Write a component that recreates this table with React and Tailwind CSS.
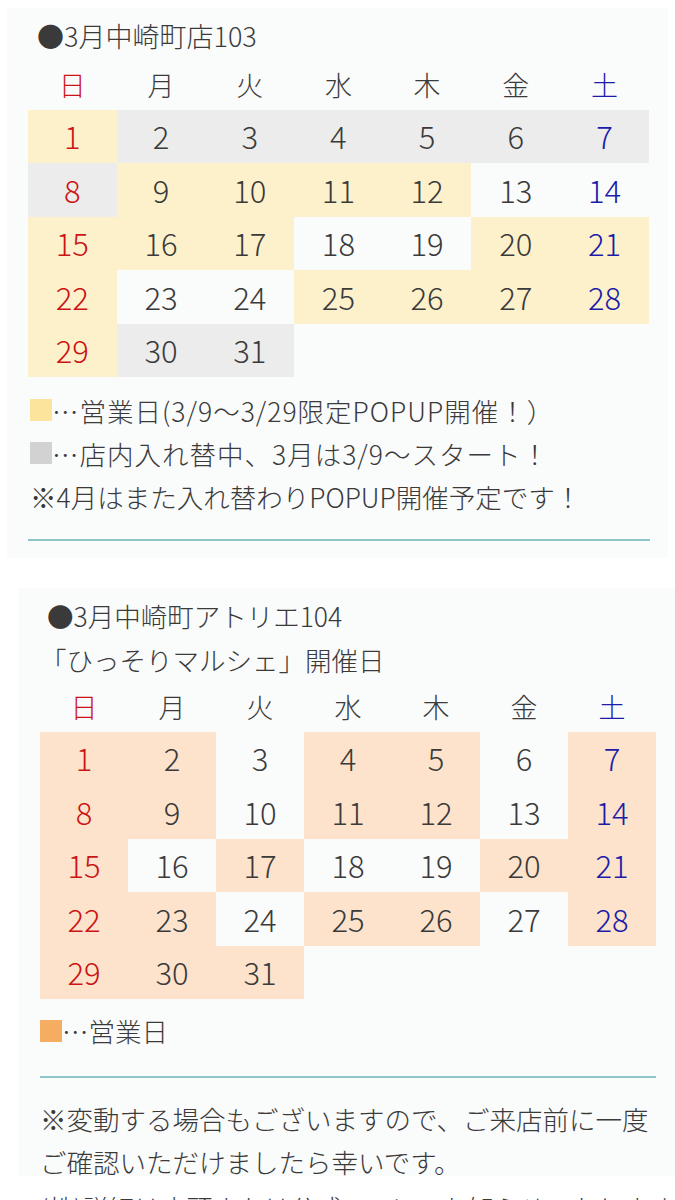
import React from "react";

const Y = "bg-[#fdf1cc]";
const G = "bg-[#ececec]";
const P = "bg-[#fde3cb]";
const W = "";

const cal1 = [
  [Y, G, G, G, G, G, G],
  [G, Y, Y, Y, Y, W, W],
  [Y, Y, Y, W, W, Y, Y],
  [Y, W, W, Y, Y, Y, Y],
  [Y, G, G],
];
const cal2 = [
  [P, P, W, P, P, W, P],
  [P, P, W, P, P, W, P],
  [P, W, P, W, W, P, P],
  [P, P, W, P, P, W, P],
  [P, P, P],
];

const days = ["日", "月", "火", "水", "木", "金", "土"];

function dayColor(i) {
  if (i === 0) return "text-[#cc1414]";
  if (i === 6) return "text-[#1c1ca8]";
  return "text-[#3a3a3a]";
}

function Calendar({ bgs, colW, headH }) {
  const cells = [];
  let n = 1;
  bgs.forEach((row, r) => {
    row.forEach((bg, c) => {
      cells.push(
        <div
          key={n}
          className={`h-[53.4px] flex items-center justify-center text-[31px] ${bg} ${dayColor(c)}`}
        >
          {n}
        </div>
      );
      n++;
    });
  });
  return (
    <div>
      <div className={`grid ${colW} ${headH} items-center`}>
        {days.map((d, i) => (
          <div key={d} className={`text-center text-[27px] ${dayColor(i)}`}>
            {d}
          </div>
        ))}
      </div>
      <div className={`grid ${colW}`}>{cells}</div>
    </div>
  );
}

export default function App() {
  return (
    <div
      className="w-[675px] h-[1200px] bg-white overflow-hidden text-[#3a3a3a] font-light"
      style={{ fontFamily: '"Noto Sans CJK JP", "Noto Sans", sans-serif' }}
    >
      {/* Panel 1 */}
      <div className="pt-[8px] pl-[7px] pr-[7px]">
        <div className="bg-[#fafbfb] h-[550px] pl-[21px] pr-[11px] pt-[10px]">
          <div className="text-[27px] leading-[36px] pl-[9px]">●3月中崎町店103</div>
          <div className="mt-[6px]">
            <Calendar bgs={cal1} colW="grid-cols-[repeat(7,88.7px)]" headH="h-[50px]" />
          </div>
          <div className="mt-[12px] text-[26.5px] leading-[43px] pl-[2px] whitespace-nowrap">
            <div className="flex items-center tracking-[1px]">
              <span className="inline-block w-[22px] h-[22px] bg-[#fce49c]"></span>
              <span>…営業日(3/9〜3/29限定POPUP開催！）</span>
            </div>
            <div className="flex items-center tracking-[1px]">
              <span className="inline-block w-[22px] h-[22px] bg-[#d2d2d2]"></span>
              <span>…店内入れ替中、3月は3/9〜スタート！</span>
            </div>
            <div>※4月はまた入れ替わりPOPUP開催予定です！</div>
          </div>
          <div className="mt-[21px] h-[2px] w-[622px] bg-[#8fc5c9]"></div>
        </div>
      </div>

      {/* Panel 2 */}
      <div className="pt-[30px] pl-[18px]">
        <div className="bg-[#fafbfb] h-[588px] pl-[22px] pr-[19px] pt-[6px]">
          <div className="text-[26.5px] leading-[44px] pl-[7px]">●3月中崎町アトリエ104</div>
          <div className="text-[26.5px] leading-[44px]">「ひっそりマルシェ」開催日</div>
          <div className="mt-[0px]">
            <Calendar bgs={cal2} colW="grid-cols-[repeat(7,88px)]" headH="h-[50px]" />
          </div>
          <div className="mt-[11px] text-[26.5px] leading-[42px] flex items-center">
            <span className="inline-block w-[22px] h-[22px] bg-[#f5ad62]"></span>
            <span>…営業日</span>
          </div>
          <div className="mt-[24px] h-[2px] w-[616px] bg-[#8fc5c9]"></div>
          <div className="mt-[19px] text-[26.5px] leading-[43px] whitespace-nowrap">
            <div>※変動する場合もございますので、ご来店前に一度</div>
            <div>ご確認いただけましたら幸いです。</div>
          </div>
        </div>
      </div>

      {/* Cut-off next line */}
      <div className="pl-[40px] pt-[14px] text-[26px] leading-[36px] whitespace-nowrap">
        (株)詳細は店頭または公式SNSにてお知らせいたします。
      </div>
    </div>
  );
}
